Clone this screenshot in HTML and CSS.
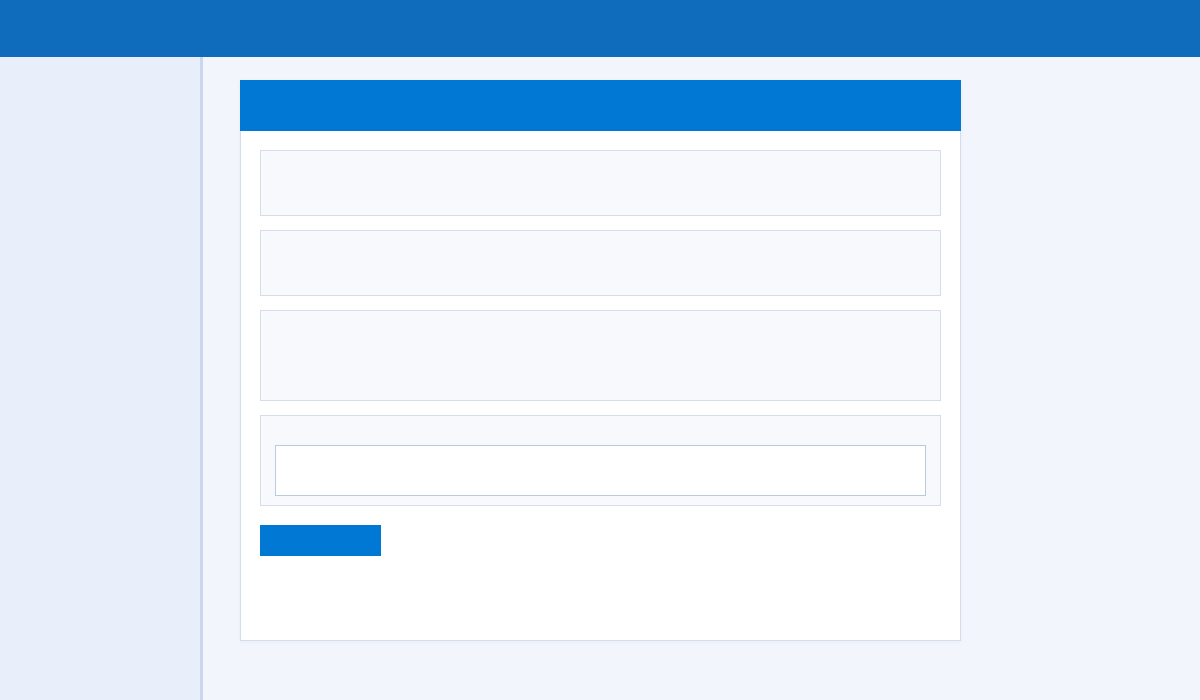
FILE: index.html
```html
<!DOCTYPE html>
<html lang="en">
<head>
<meta charset="utf-8">
<title>Form</title>
<link rel="stylesheet" href="styles.css">
</head>
<body>
<header class="topbar"></header>
<div class="layout">
  <aside class="sidebar"></aside>
  <main class="main">
    <section class="card">
      <div class="card-header"></div>
      <div class="card-body">
        <div class="panel panel-short"></div>
        <div class="panel panel-short"></div>
        <div class="panel panel-tall"></div>
        <div class="panel panel-field">
          <div class="input"></div>
        </div>
        <div class="button"></div>
      </div>
    </section>
  </main>
</div>
</body>
</html>
```
FILE: styles.css
```css
* { box-sizing: border-box; }
html, body { margin: 0; padding: 0; height: 100%; }
body {
  font-family: "Liberation Sans", Arial, sans-serif;
  background: #f2f6fc;
  overflow: hidden;
}
.topbar {
  height: 57px;
  background: #0f6cbd;
}
.layout {
  display: flex;
  height: 643px;
}
.sidebar {
  width: 203px;
  flex: none;
  background: #e8effb;
  border-right: 3px solid #cad8ee;
}
.main {
  flex: 1;
  padding: 23px 0 0 37px;
  background: #f2f6fc;
}
.card {
  width: 721px;
  background: #ffffff;
  box-shadow: 0 1px 4px rgba(30, 60, 120, 0.05);
}
.card-header {
  height: 51px;
  background: #0078d4;
}
.card-body {
  border: 1px solid #d5ddec;
  border-top: none;
  padding: 19px 19px 84px;
  display: flex;
  flex-direction: column;
  gap: 14px;
}
.panel {
  background: #f7f9fd;
  border: 1px solid #d6dde9;
}
.panel-short { height: 66px; }
.panel-tall { height: 91px; }
.panel-field {
  height: 91px;
  padding: 29px 14px 0;
}
.input {
  height: 51px;
  background: #ffffff;
  border: 1px solid #bccadd;
}
.button {
  margin-top: 5px;
  width: 121px;
  height: 31px;
  background: #0078d4;
}
```
